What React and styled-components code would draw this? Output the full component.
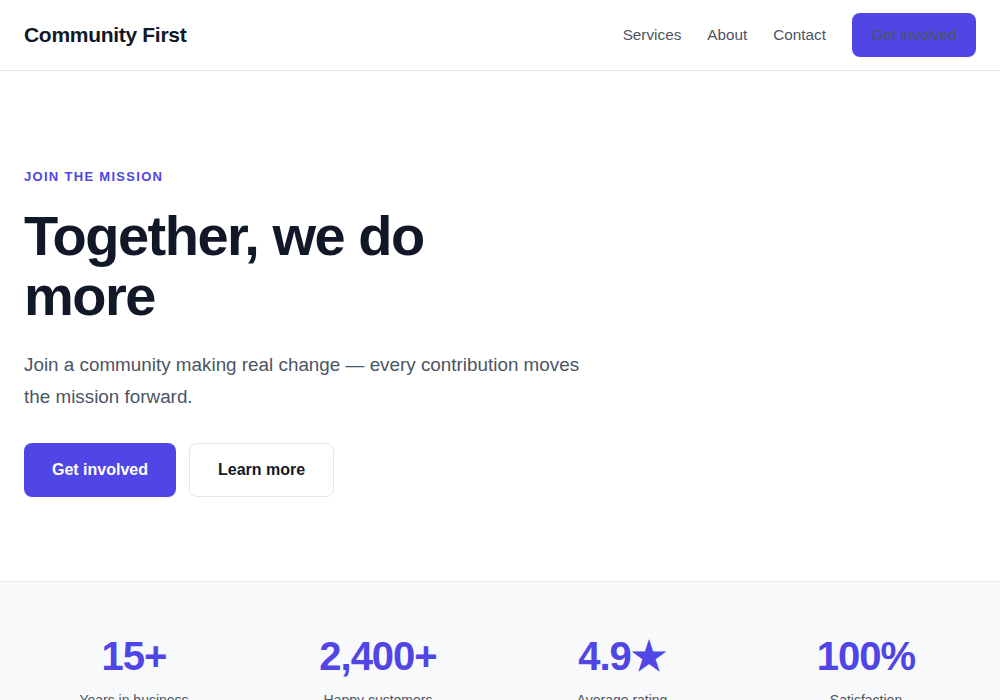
import React from 'react';
import styled, { createGlobalStyle } from 'styled-components';

const GlobalStyle = createGlobalStyle`
  * { box-sizing: border-box; }
  body {
    margin: 0;
    background: #ffffff;
    font-family: 'Liberation Sans', Arial, sans-serif;
    color: #111827;
  }
`

const HeaderBar = styled.header`
  height: 71px;
  padding: 0 24px;
  display: flex;
  align-items: center;
  justify-content: space-between;
  border-bottom: 1px solid #e5e7eb;
`

const Logo = styled.div`
  font-size: 21px;
  letter-spacing: -0.3px;
  font-weight: bold;
  color: #111827;
`

const Nav = styled.nav`
  display: flex;
  align-items: center;
`

const NavLink = styled.a`
  font-size: 15.3px;
  line-height: 18px;
  color: #4b5563;
  margin-right: 26px;
  text-decoration: none;
`

const NavButton = styled.a`
  display: flex;
  align-items: center;
  justify-content: center;
  width: 124px;
  height: 44px;
  border-radius: 8px;
  background: #4f46e5;
  color: #4b5563;
  font-size: 15.3px;
  text-decoration: none;
`

const Hero = styled.section`
  padding: 97px 24px 84px;
`

const Eyebrow = styled.div`
  font-size: 13px;
  font-weight: bold;
  letter-spacing: 1.3px;
  color: #4f46e5;
  text-transform: uppercase;
  line-height: 18px;
`

const Title = styled.h1`
  margin: 20px 0 0;
  max-width: 520px;
  font-size: 56px;
  line-height: 60px;
  letter-spacing: -1.5px;
  font-weight: bold;
  color: #111827;
`

const Lead = styled.p`
  margin: 23px 0 0;
  max-width: 580px;
  font-size: 18.85px;
  line-height: 32px;
  color: #4b5563;
`

const Actions = styled.div`
  display: flex;
  gap: 13px;
  margin-top: 30px;
`

const Button = styled.a`
  display: flex;
  align-items: center;
  justify-content: center;
  height: 54px;
  padding: 0 28px;
  border-radius: 8px;
  font-size: 16px;
  font-weight: bold;
  text-decoration: none;
  background: ${p => (p.$primary ? '#4f46e5' : '#ffffff')};
  color: ${p => (p.$primary ? '#ffffff' : '#111827')};
  border: ${p => (p.$primary ? 'none' : '1px solid #e5e7eb')};
`

const Stats = styled.section`
  background: #f8f9fb;
  border-top: 1px solid #e5e7eb;
  padding: 50px 24px 48px;
  display: grid;
  grid-template-columns: repeat(4, 1fr);
  gap: 24px;
`

const Stat = styled.div`
  text-align: center;
`

const StatValue = styled.div`
  font-size: 40px;
  line-height: 48px;
  letter-spacing: -1px;
  font-weight: bold;
  color: #4f46e5;
`

const StatLabel = styled.div`
  margin-top: 12px;
  font-size: 14px;
  color: #4b5563;
`

const stats = [
  { value: '15+', label: 'Years in business' },
  { value: '2,400+', label: 'Happy customers' },
  { value: '4.9★', label: 'Average rating' },
  { value: '100%', label: 'Satisfaction' },
]

export default function App() {
  return (
    <>
      <GlobalStyle />
      <HeaderBar>
        <Logo>Community First</Logo>
        <Nav>
          <NavLink>Services</NavLink>
          <NavLink>About</NavLink>
          <NavLink>Contact</NavLink>
          <NavButton>Get involved</NavButton>
        </Nav>
      </HeaderBar>
      <Hero>
        <Eyebrow>Join the mission</Eyebrow>
        <Title>Together, we do more</Title>
        <Lead>Join a community making real change — every contribution moves the mission forward.</Lead>
        <Actions>
          <Button $primary>Get involved</Button>
          <Button>Learn more</Button>
        </Actions>
      </Hero>
      <Stats>
        {stats.map(s => (
          <Stat key={s.label}>
            <StatValue>{s.value}</StatValue>
            <StatLabel>{s.label}</StatLabel>
          </Stat>
        ))}
      </Stats>
    </>
  );
}
